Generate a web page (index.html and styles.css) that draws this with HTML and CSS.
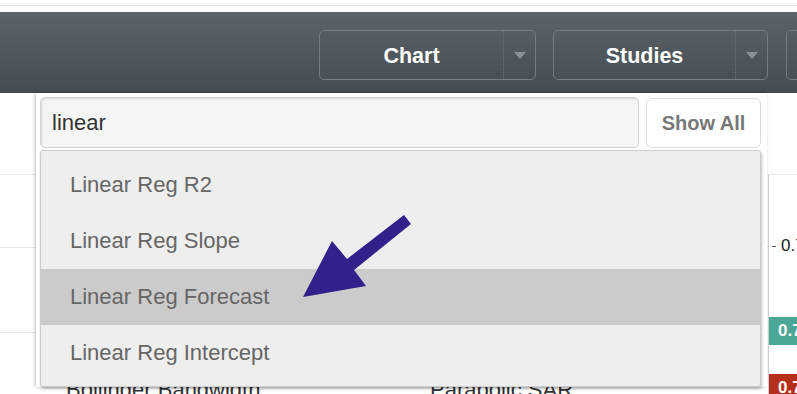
FILE: index.html
```html
<!DOCTYPE html>
<html lang="en">
<head>
  <meta charset="UTF-8" />
  <title>Studies</title>
  <link rel="stylesheet" href="styles.css">
</head>
<body>

<div class="topstrip"></div>

<header class="toolbar">
  <div class="menu-btn">
    <span class="menu-label">Chart</span>
    <span class="menu-caret"><i></i></span>
  </div>
  <div class="menu-btn">
    <span class="menu-label">Studies</span>
    <span class="menu-caret"><i></i></span>
  </div>
  <div class="menu-btn menu-cut">
    <span class="menu-label"></span>
  </div>
</header>

<main class="content">
  <!-- chart / table underneath the dropdown -->
  <div class="grid">
    <div class="rows">
      <div class="row row-1"></div>
      <div class="row row-2"></div>
      <div class="row row-3"></div>
      <div class="row row-4">
        <span class="cell-name">Bollinger Bandwidth</span>
        <span class="cell-name cell-right">Parabolic SAR</span>
      </div>
    </div>
    <div class="axis">
      <div class="axis-top"></div>
      <div class="axis-body">
        <div class="tick"><span class="tick-mark"></span>0.7</div>
        <div class="badge badge-green">0.7</div>
        <div class="badge badge-red">0.7</div>
      </div>
    </div>
  </div>

  <!-- study search dropdown -->
  <div class="study-panel">
    <div class="search-row">
      <div class="search-input">linear</div>
      <button class="show-all">Show All</button>
    </div>
    <ul class="study-list">
      <li>Linear Reg R2</li>
      <li>Linear Reg Slope</li>
      <li class="active">Linear Reg Forecast</li>
      <li>Linear Reg Intercept</li>
    </ul>
  </div>

  <svg class="pointer" width="115" height="92" viewBox="0 0 115 92">
    <polygon points="104,5 111,14 54,60 66,76 3,87 32,31 47,49" fill="#33208a"/>
  </svg>
</main>

</body>
</html>
```

FILE: styles.css
```css
body {
  margin: 0;
  font-family: 'Liberation Sans', Arial, sans-serif;
  background: #fff;
  overflow: hidden;
}

.topstrip {
  height: 5px;
  border-bottom: 1px solid #e4e4e4;
  margin-bottom: 6px;
}

.toolbar {
  display: flex;
  gap: 17px;
  height: 81px;
  box-sizing: border-box;
  padding: 18px 0 0 319px;
  background: linear-gradient(#5d6469, #454c51);
  overflow: hidden;
}

.menu-btn {
  display: flex;
  flex-shrink: 0;
  height: 50px;
  box-sizing: border-box;
  border: 1px solid #767c81;
  border-radius: 5px;
}

.menu-btn:first-child {
  width: 217px;
}

.menu-btn:nth-child(2) {
  width: 215px;
}

.menu-cut {
  width: 100px;
  margin-left: 1px;
}

.menu-label {
  flex: 1;
  display: flex;
  align-items: center;
  justify-content: center;
  color: #fff;
  font-weight: bold;
  font-size: 21.5px;
  padding-top: 3px;
}

.menu-caret {
  width: 31px;
  border-left: 1px dotted #6f767b;
  display: flex;
  align-items: center;
  justify-content: center;
}

.menu-caret i {
  width: 0;
  height: 0;
  border-left: 6px solid transparent;
  border-right: 6px solid transparent;
  border-top: 7px solid #8c9297;
}

.content {
  position: relative;
  height: 301px;
}

.grid {
  display: flex;
  height: 100%;
}

.rows {
  width: 768px;
  flex-shrink: 0;
}

.row {
  border-bottom: 1px solid #e8e8e8;
  box-sizing: border-box;
}

.row-1 { height: 82px; }
.row-2 { height: 73px; }
.row-3 { height: 85px; }

.row-4 {
  border-bottom: none;
  position: relative;
  padding: 44px 0 0 66px;
  font-size: 22px;
  line-height: 26px;
  color: #333;
}

.cell-right {
  position: absolute;
  left: 430px;
}

.axis {
  flex: 1;
  display: flex;
  flex-direction: column;
  overflow: hidden;
}

.axis-top {
  flex-shrink: 0;
  height: 82px;
  box-sizing: border-box;
  border-bottom: 1px solid #e8e8e8;
}

.axis-body {
  flex: 1;
  min-height: 0;
  border-left: 1px solid #cfcfcf;
  padding-top: 61px;
}

.tick {
  display: flex;
  align-items: center;
  height: 20px;
  font-size: 17px;
  color: #222;
  white-space: nowrap;
}

.tick-mark {
  flex-shrink: 0;
  width: 4px;
  height: 1px;
  background: #555;
  margin: 0 5px 0 3px;
}

.badge {
  height: 28px;
  line-height: 28px;
  padding-left: 9px;
  color: #fff;
  font-weight: bold;
  font-size: 17px;
  white-space: nowrap;
}

.badge-green {
  margin-top: 61px;
  background: #4aa796;
}

.badge-red {
  margin-top: 29px;
  background: #b62f1d;
}

.study-panel {
  position: absolute;
  left: 36px;
  top: 0;
  width: 731px;
  box-sizing: border-box;
  padding: 4px 6px 0 4px;
  background: #fff;
  box-shadow: -1px 0 3px rgba(0, 0, 0, 0.25);
}

.search-row {
  display: flex;
  gap: 7px;
}

.search-input {
  flex: 1;
  height: 51px;
  box-sizing: border-box;
  padding-left: 11px;
  display: flex;
  align-items: center;
  background: #f5f5f5;
  border: 1px solid #d2d2d2;
  border-radius: 5px;
  box-shadow: inset 1px 1px 2px rgba(0, 0, 0, 0.12);
  font-size: 22px;
  color: #333;
}

.show-all {
  width: 115px;
  height: 50px;
  margin-top: 1px;
  background: #fff;
  border: 1px solid #dcdcdc;
  border-radius: 6px;
  font-family: inherit;
  font-weight: bold;
  font-size: 20px;
  color: #777;
  padding: 0;
}

.study-list {
  list-style: none;
  margin: 2px 0 0;
  padding: 6px 0 5px;
  background: #eee;
  border: 1px solid #cdcdcd;
  border-radius: 3px;
  box-shadow: 1px 2px 3px rgba(0, 0, 0, 0.25);
}

.study-list li {
  height: 56px;
  display: flex;
  align-items: center;
  padding-left: 29px;
  font-size: 22px;
  color: #666;
}

.study-list li.active {
  background: #cbcbcb;
}

.pointer {
  position: absolute;
  left: 300px;
  top: 117px;
}
```
